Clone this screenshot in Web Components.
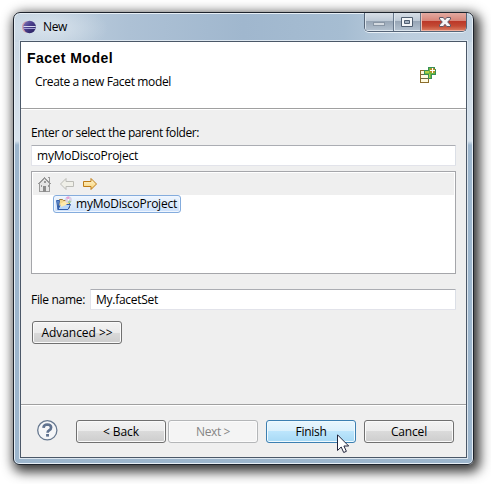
<!DOCTYPE html>
<html lang="en"><head><meta charset="utf-8"><title>New</title>
<style>
html,body{margin:0;width:491px;height:484px;overflow:hidden;background:#fff}
body{box-sizing:border-box;padding:12px 17px 19px 13px;font:12px/16px "Open Sans","Noto Sans",sans-serif;color:#000}
</style></head><body>
<facet-wizard></facet-wizard>
<script>
function make(name, html, setup){
  const t=document.createElement('template'); t.innerHTML=html;
  customElements.define(name, class extends HTMLElement{
    constructor(){super();this.attachShadow({mode:'open'}).append(t.content.cloneNode(true));}
    connectedCallback(){ if(setup) setup(this,this.shadowRoot); }
  });
}
/* Label whose tracking is adjusted so the run takes the given width. */
make('fit-label','<style>:host{display:inline-block;white-space:nowrap}span{display:inline-block}</style><span><slot></slot></span>',(el,r)=>{
  const s=r.querySelector('span'), n=el.textContent.length, w=+el.getAttribute('w');
  s.style.letterSpacing=((w-s.getBoundingClientRect().width)/n)+'px';
});
make('push-button',`<style>
:host{display:flex;box-sizing:border-box;width:90px;height:23px;border:1px solid #707070;border-radius:3px;align-items:center;justify-content:center;
 background:linear-gradient(#f3f3f3,#ebebeb 50%,#dadada 50%,#cdcdcd);box-shadow:inset 0 0 0 1px #fafafa;padding-top:1px}
:host([disabled]){border-color:#b4b6b8;background:#f4f4f4;color:#858585;box-shadow:inset 0 0 0 1px #fbfbfb}
:host([hot]){border-color:#3c7fb1;background:linear-gradient(#e9f6fd,#d9f0fc 50%,#bce5fc 50%,#a7d9f5);box-shadow:inset 0 0 0 1px #effaff}
</style><slot></slot>`);
make('text-field',`<style>
:host{display:flex;box-sizing:border-box;height:21px;border:1px solid #e2e3ea;border-top-color:#abadb3;border-right-color:#dbdfe6;border-radius:1px;background:#fff;align-items:center;padding:1px 0 0 5px}
</style><slot></slot>`);
make('eclipse-icon',`<style>:host{display:block;width:14px;height:14px}svg{display:block}</style>
<svg width="14" height="14" viewBox="0 0 14 14"><defs><linearGradient id="g" x2="1" y2="1"><stop stop-color="#8b82bc"/><stop offset=".4" stop-color="#4c408f"/><stop offset="1" stop-color="#211b58"/></linearGradient></defs>
<path d="M5 1Q0 2 0 7t5 6Q2 7 5 1" fill="#d4a0a8"/><circle cx="7.6" cy="7" r="6.2" fill="url(#g)"/><path d="M1.500 6.500h12.200" stroke="#d8daf0" stroke-width="1"/><path d="M1.500 8.500h12.200" stroke="#a5a3d6" stroke-width="1"/></svg>`);
make('caption-buttons',`<style>
:host{display:grid;grid-template-columns:29px 27px 47px;width:103px;height:19px;box-sizing:border-box;border:1px solid #566578;border-top:0;border-radius:0 0 5px 5px;overflow:hidden;box-shadow:0 1px 0 #e8f0f7}
div{box-sizing:border-box;background:linear-gradient(#d8dfe7,#bcc8d5 46%,#98a6b6 47%,#b5c3d1);border-right:1px solid #66768a;box-shadow:inset 1px 0 0 #dce5ed,inset 0 -1px 0 #dce5ed}
.c{border-right:0;background:linear-gradient(#e2aaa1,#d78376 46%,#bc3829 47%,#c34a34 72%,#dc8066);box-shadow:inset 1px 0 0 #ecc0b5,inset 0 -1px 0 #efb09f,inset -1px 0 0 #e9b1a5}
svg{display:block}
</style>
<div><svg width="28" height="18"><rect x="8.500" y="9.500" width="11" height="3" fill="#d4dae1" stroke="#8996a5"/></svg></div>
<div><svg width="26" height="18"><path d="M7.500 4.500h11v9h-11z" fill="#f4f6f8" stroke="#505e70"/><path d="M10.500 7.500h5v3h-5z" fill="#a2afbf" stroke="#505e70"/></svg></div>
<div class="c"><svg width="46" height="18"><path d="M18.500 4.500h3.800l1.700 2.200 1.700-2.200h3.800V6L26.700 9l2.800 3v1.500h-3.800l-1.700-2.200-1.700 2.200h-3.800V12l2.800-3-2.800-3z" fill="#f5f5f6" stroke="#5f5664"/></svg></div>`);
make('wizard-header',`<style>
:host{display:flex;box-sizing:border-box;height:68px;background:linear-gradient(#fff,#fff) 0 0/100% 66px no-repeat,linear-gradient(#a0a0a0,#a0a0a0) 0 66px/100% 1px no-repeat,#fff;padding:8px 30px 0 6px;justify-content:space-between}
h1{margin:0;font:bold 14px/16px "Liberation Sans",Arial,sans-serif}p{margin:8px 0 0 8px}svg{display:block;margin-top:17px}
</style><div><h1><fit-label w="86">Facet Model</fit-label></h1><p><fit-label w="136">Create a new Facet model</fit-label></p></div>
<svg width="16" height="16" viewBox="0 0 16 16" shape-rendering="crispEdges"><path d="M.5 3.500h8v12h-8z" fill="#fffbe0" stroke="#8c6d2c"/><path d="M1 7.500h7M1 11.500h7" stroke="#6e6640"/><path d="M4.500 3.500h4v-3h6v2h1v5h-4v4h-3v-4h-4z" fill="#70b83c" stroke="#389058"/><path d="M5 4h4v2H5zM9 7h1v4H9z" fill="#b0cf45"/><path d="M11 1h3v1h1v3h-1v1h-3V5h-1V2h1z" fill="#bd8b25"/><path d="M12 1h1v5h-1zM10 3h5v1h-5z" fill="#fff"/></svg>`);
make('folder-tree',`<style>
:host{display:block;box-sizing:border-box;height:103px;border:1px solid #a5a6aa;background:#fff;padding:1px}
.bar{height:22px;background:#efefef;display:flex;align-items:center;gap:6px;padding:0 0 0 4px;box-sizing:border-box}
.row{display:flex;box-sizing:border-box;width:128px;height:18px;margin:0 0 0 20px;border:1px solid #84acdd;border-radius:3px;background:linear-gradient(#eff6fe,#cbe0fb);box-shadow:inset 0 0 0 1px #f0f6fe;padding:0 0 0 2px;align-items:center;gap:4px}
svg{display:block;flex:none}
</style>
<div class="bar">
<svg width="16" height="16" viewBox="0 0 16 16" shape-rendering="crispEdges"><path d="M2.500 7.500V15.500h10V7.500L7.500 2.500z" fill="#e6e6e6" stroke="#999"/><path d="M.5 8.500L7.500 1.500l7 7M10.500 1.500h2v4" fill="none" stroke="#999"/><path d="M6 10h3v6H6z" fill="#8c8c8c"/><path d="M7 5h2v2H7zM4 9h1v2H4zM11 9h1v2h-1z" fill="#999"/></svg>
<svg width="17" height="16" viewBox="0 0 17 16"><path d="M1.500 8L7 2.500v3h7.500v5H7v3z" fill="#f0f0e9" stroke="#bcbcb7" stroke-linejoin="round"/></svg>
<svg width="17" height="16" viewBox="0 0 17 16"><defs><linearGradient id="a" x2="0" y2="1"><stop stop-color="#fff8d5"/><stop offset="1" stop-color="#f8cf70"/></linearGradient></defs><path d="M14.500 8L9 2.500v3H1.500v5H9v3z" fill="url(#a)" stroke="#bd7b17" stroke-linejoin="round"/></svg>
</div>
<div class="row"><svg width="16" height="16" viewBox="0 0 16 16"><path d="M2.500 12V4.500l1-1h3l1 1h6V12z" fill="#f0d68c" stroke="#a47b36"/><path d="M.6 4.500h2.900L2 13.500z" fill="#6994d2" stroke="#315daa"/><path d="M4.500 8.500h10l-2.500 5H2z" fill="#b6d7fc" stroke="#315daa"/><path d="M4 8l5-3 3 2-2 2-5 2z" fill="#fde9ab"/><circle cx="12.500" cy="3.800" r="3.300" fill="#d7d0e5"/><path d="M12.500 3.800L10 1.500q2-1.500 3.500-.8z" fill="#e8a0d4"/><path d="M12.500 3.800l3 2q-2 2-3.500 1z" fill="#9bcf9e"/><circle cx="12.500" cy="3.800" r=".9" fill="#fff"/></svg><fit-label w="101">myMoDiscoProject</fit-label></div>`);
make('wizard-body',`<style>
:host{display:block;box-sizing:border-box;height:294px;padding:15px 10px 0}
.name{display:grid;grid-template-columns:59px 1fr;margin-top:15px;align-items:center}
text-field{margin-top:3px}.name text-field{margin:0}folder-tree{margin-top:5px}push-button{margin:11px 0 0 1px}
.l{display:block;height:17px}
</style>
<div class="l"><fit-label w="168">Enter or select the parent folder:</fit-label></div>
<text-field><fit-label w="101">myMoDiscoProject</fit-label></text-field>
<folder-tree></folder-tree>
<div class="name"><fit-label w="54">File name:</fit-label><text-field><fit-label w="62">My.facetSet</fit-label></text-field></div>
<push-button><fit-label w="71">Advanced &gt;&gt;</fit-label></push-button>`);
make('wizard-footer',`<style>
:host{display:flex;box-sizing:border-box;height:53px;border-top:1px solid #a0a0a0;box-shadow:inset 0 1px #fff;padding:15px 12px 0 16px;gap:2px;align-items:flex-start}
.help{display:block;margin-right:16px}.hot{position:relative;margin:0 6px}.cursor{position:absolute;left:71px;top:14px}
</style>
<svg class="help" width="21" height="21" viewBox="0 0 21 21"><circle cx="10.300" cy="10.300" r="9.600" fill="#f5f6f8" stroke="#66788f" stroke-width="1.300"/><path d="M6.500 7.800Q6.700 4.500 10.300 4.500q3.800.1 3.800 3 0 1.700-2 2.900-1.500.9-1.500 2.300" fill="none" stroke="#5f728f" stroke-width="2.700"/><path d="M9.100 14h2.900v2.600H9.100z" fill="#5f728f"/></svg>
<push-button><fit-label w="36">&lt; Back</fit-label></push-button>
<push-button disabled><fit-label w="34">Next &gt;</fit-label></push-button>
<div class="hot"><push-button hot><fit-label w="31">Finish</fit-label></push-button>
<svg class="cursor" width="14" height="21" viewBox="0 0 14 21"><path d="M.5.800V16.500l3.700-3.500 2.500 5.500 2.700-1.200-2.500-5.300h4.800z" fill="#fff" stroke="#20243c"/></svg></div>
<push-button><fit-label w="36">Cancel</fit-label></push-button>`);
make('facet-wizard',`<style>
:host{display:block;box-sizing:border-box;width:461px;height:453px;border:1px solid #1d232c;border-radius:7px 7px 6px 6px;
 background:radial-gradient(ellipse 58px 25px at 36px 15px,#dfe8f0cc,#dfe8f000),linear-gradient(90deg,#c5d4e1,#adc1d5 25%,#a0b7ce 50%,#a6bdd2 72%,#bccddd 85%,#c2d2e1) 0 0/100% 29px no-repeat,linear-gradient(#c6d4e1,#d8e3ed 128px,#9db6cd 132px);
 box-shadow:inset 0 0 0 1px #e6eef5,3px 4px 12px 3px rgba(0,0,0,.78);padding:0 6px 6px}
.title{display:flex;height:28px;align-items:flex-start}eclipse-icon{margin:7px 0 0 2px}.title fit-label{margin:6px 0 0 7px}caption-buttons{margin-left:auto}
.client{box-sizing:border-box;height:417px;border:1px solid #4b5868;background:#efefef;box-shadow:0 0 0 1px #dce6ef}
</style>
<div class="title"><eclipse-icon></eclipse-icon><fit-label w="24">New</fit-label><caption-buttons></caption-buttons></div>
<div class="client"><wizard-header></wizard-header><wizard-body></wizard-body><wizard-footer></wizard-footer></div>`);
</script></body></html>
